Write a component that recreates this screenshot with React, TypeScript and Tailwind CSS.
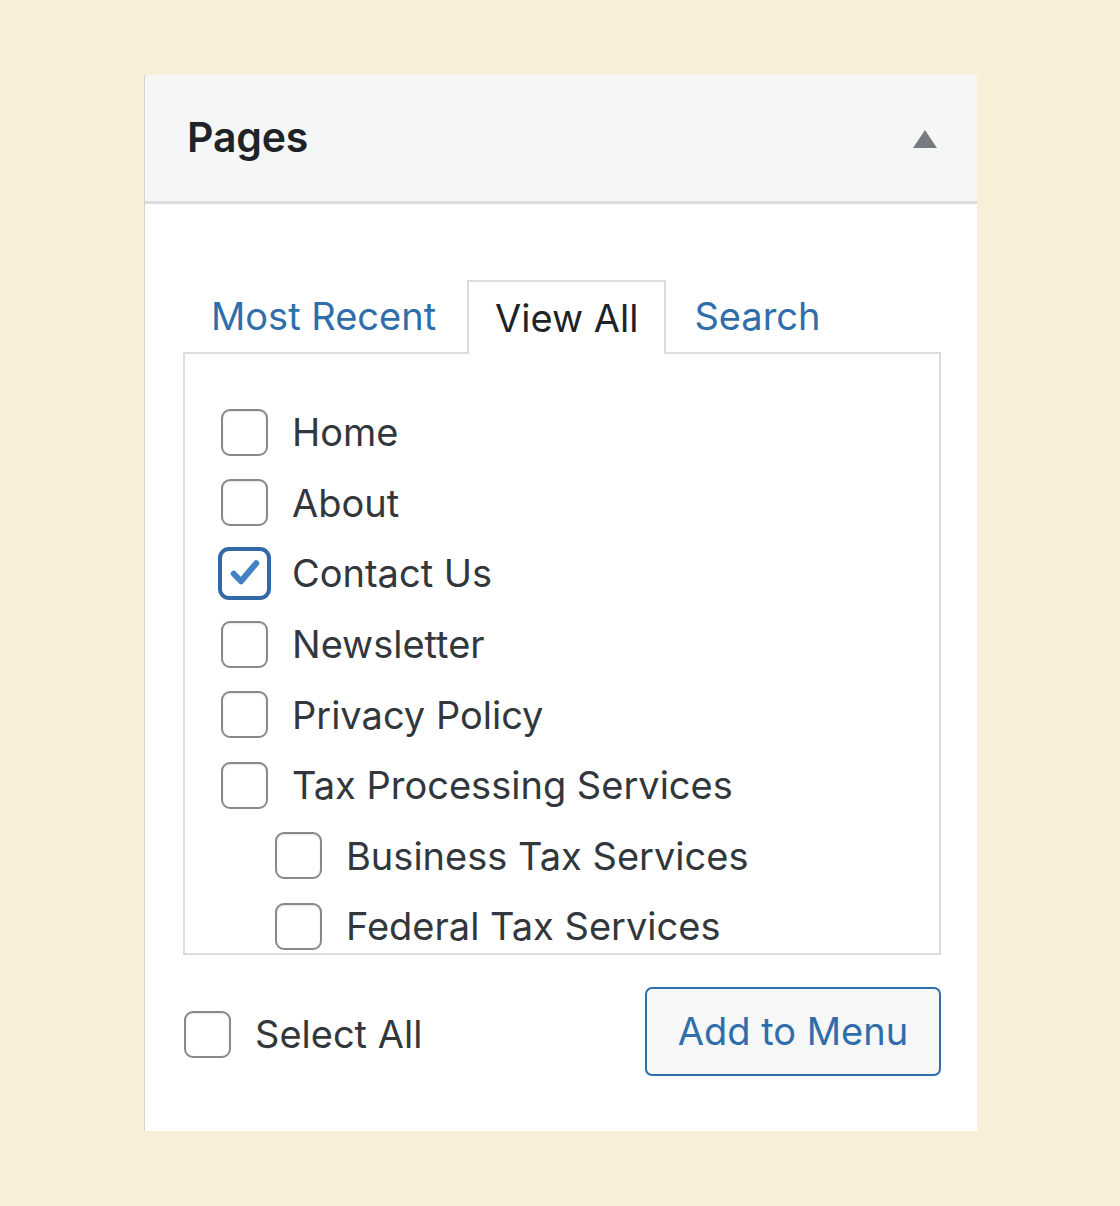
import React from 'react';

type Page = { title: string; level: number; checked?: boolean };

const pages: Page[] = [
  { title: 'Home', level: 0 },
  { title: 'About', level: 0 },
  { title: 'Contact Us', level: 0, checked: true },
  { title: 'Newsletter', level: 0 },
  { title: 'Privacy Policy', level: 0 },
  { title: 'Tax Processing Services', level: 0 },
  { title: 'Business Tax Services', level: 1 },
  { title: 'Federal Tax Services', level: 1 },
];

function Checkbox({ checked }: { checked?: boolean }) {
  if (checked) {
    // focused + checked: thicker blue ring
    return (
      <span className="-m-[3px] w-[53px] h-[53px] shrink-0 rounded-[11px] border-[4px] border-[#3269a6] bg-white flex items-center justify-center">
        <svg viewBox="0 0 24 24" className="w-[36px] h-[36px]">
          <path d="M4.5 12.5l4.8 5L19.5 5.5" fill="none" stroke="#4281c4" strokeWidth="4" strokeLinecap="round" strokeLinejoin="round" />
        </svg>
      </span>
    );
  }
  return (
    <span className="w-[47px] h-[47px] shrink-0 rounded-[9px] border-2 border-[#86898e] bg-white shadow-[inset_0_1px_2px_rgba(0,0,0,0.1)]" />
  );
}

export default function App() {
  return (
    <div className="min-h-[1206px] bg-[#f8efd9] pt-[75px] pl-[144px]" style={{ fontFamily: 'Inter, "Noto Sans", sans-serif' }}>
      <div className="w-[833px] h-[1056px] bg-white border-l border-[#d8d3c4]">
        {/* Header */}
        <div className="h-[129px] bg-[#f5f7f7] border-b-[3px] border-[#dcdcde] flex items-center justify-between pl-[42px] pr-[40px]">
          <h2 className="text-[41px] font-semibold text-[#1d2327] tracking-[-0.2px]">Pages</h2>
          <svg viewBox="0 0 24 18" className="w-[24px] h-[18px] mt-[2px]">
            <path d="M12 0L24 18H0Z" fill="#787c82" />
          </svg>
        </div>

        {/* Body */}
        <div className="pl-[38px] pr-[36px] pt-[76px]">
          <div className="flex items-end">
            <div className="h-[72px] px-[28px] flex items-center text-[38px] text-[#2f6eab]">Most Recent</div>
            <div className="relative z-10 -mb-[2px] ml-[3px] h-[74px] px-[26px] flex items-center text-[38px] text-[#1d2327] bg-white border-2 border-b-0 border-[#dcdcde]">
              View All
            </div>
            <div className="h-[72px] px-[28px] flex items-center text-[38px] text-[#2f6eab]">Search</div>
          </div>

          <div className="h-[603px] border-2 border-[#dcdcde] overflow-hidden pl-[36px] pt-[43px]">
            {pages.map((p) => (
              <div
                key={p.title}
                className={`h-[70.6px] flex items-center gap-[24px] ${p.level ? 'pl-[54px]' : ''}`}
              >
                <Checkbox checked={p.checked} />
                <span className="text-[38px] text-[#32373c] leading-none">{p.title}</span>
              </div>
            ))}
          </div>

          <div className="flex items-center justify-between mt-[32px]">
            <label className="flex items-center gap-[24px] mt-[5px] ml-[1px]">
              <Checkbox />
              <span className="text-[38px] text-[#32373c]">Select All</span>
            </label>
            <button className="w-[296px] h-[89px] rounded-[7px] border-2 border-[#2f6eab] bg-[#f6f7f7] text-[38px] text-[#2f6eab]">
              Add to Menu
            </button>
          </div>
        </div>
      </div>
    </div>
  );
}
